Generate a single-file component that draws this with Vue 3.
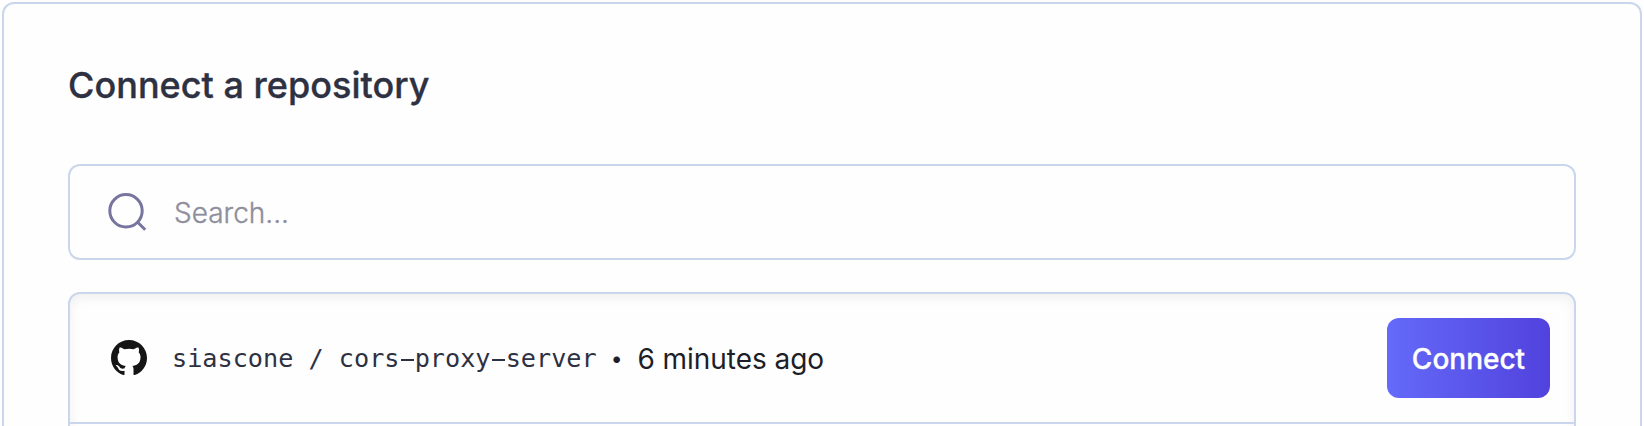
<script setup>
import { ref } from 'vue'

const query = ref('')
const owner = 'siascone'
const nameParts = 'cors-proxy-server'.split(/(-)/)
</script>

<template>
  <section class="card">
    <h1 class="title">Connect a repository</h1>
    <label class="search">
      <svg class="search-icon" viewBox="0 0 40 40" fill="none" stroke="#77749f" stroke-width="3">
        <circle cx="18" cy="18.8" r="16.2" />
        <path d="M29.4 30L37.2 37.7" />
      </svg>
      <input v-model="query" class="search-input" type="text" placeholder="Search..." />
    </label>
    <div class="list">
      <div class="row">
        <svg class="github" viewBox="0 0 16 16" fill="#151516">
          <path fill-rule="evenodd" d="M8 0C3.58 0 0 3.58 0 8c0 3.54 2.29 6.53 5.47 7.59.4.07.55-.17.55-.38 0-.19-.01-.82-.01-1.49-2.01.37-2.53-.49-2.69-.94-.09-.23-.48-.94-.82-1.13-.28-.15-.68-.52-.01-.53.63-.01 1.08.58 1.23.82.72 1.21 1.87.87 2.33.66.07-.52.28-.87.51-1.07-1.78-.2-3.64-.89-3.64-3.95 0-.87.31-1.59.82-2.15-.08-.2-.36-1.02.08-2.12 0 0 .67-.21 2.2.82.64-.18 1.32-.27 2-.27s1.36.09 2 .27c1.53-1.04 2.2-.82 2.2-.82.44 1.1.16 1.92.08 2.12.51.56.82 1.27.82 2.15 0 3.07-1.87 3.75-3.65 3.95.29.25.54.73.54 1.48 0 1.07-.01 1.93-.01 2.2 0 .21.15.46.55.38A8.01 8.01 0 0 0 16 8c0-4.42-3.58-8-8-8z" />
        </svg>
        <span class="repo">{{ owner }} / <span v-for="(part, i) in nameParts" :key="i" :class="{ dash: part === '-' }">{{ part }}</span></span>
        <span class="dot">•</span>
        <span class="time">6 minutes ago</span>
        <button class="connect" type="button">Connect</button>
      </div>
      <div class="row"></div>
    </div>
  </section>
</template>

<style>
body {
  background: #fefefe;
  overflow: hidden;
}
</style>

<style scoped>
.card {
  box-sizing: border-box;
  height: 424px;
  margin: 2px 2px 0;
  padding: 59px 64px 0;
  border: 2px solid #c9d6ec;
  border-bottom: 0;
  border-radius: 12px 12px 0 0;
  font-family: Inter, "Liberation Sans", sans-serif;
  overflow: hidden;
}
.title {
  margin: 0 0 57px;
  color: #2e3142;
  font-size: 36px;
  font-weight: 500;
  line-height: 44px;
  letter-spacing: 0.03px;
  -webkit-text-stroke: 0.35px currentColor;
}
.search {
  box-sizing: border-box;
  display: flex;
  align-items: center;
  height: 96px;
  padding-left: 38px;
  border: 2px solid #c9d6ec;
  border-radius: 12px;
}
.search-icon {
  width: 40px;
  height: 40px;
}
.search-input {
  flex: 1;
  margin: 2px 0 0 26px;
  padding: 0;
  border: 0;
  outline: 0;
  background: none;
  font: 300 28px/40px Inter, "Liberation Sans", sans-serif;
}
.search-input::placeholder {
  color: #8e8f9c;
  opacity: 1;
  -webkit-text-stroke: 0.35px #8e8f9c;
}
.list {
  margin-top: 32px;
  border: 2px solid #c9d6ec;
  border-radius: 12px;
  box-shadow: inset 0 4px 12px rgba(0, 0, 0, 0.06);
}
.row {
  box-sizing: content-box;
  display: flex;
  align-items: center;
  height: 80px;
  padding: 24px 24px 24px 41px;
  border-bottom: 2px solid #c9d6ec;
}
.github {
  width: 36px;
  height: 36px;
}
.repo {
  margin: 2px 0 0 25px;
  color: #2e3142;
  font: 25.2px/40px "DejaVu Sans Mono", monospace;
  white-space: pre;
}
/* widens the hyphen to nearly a full character cell */
.dash {
  display: inline-block;
  background: linear-gradient(#2e3142, #2e3142) 50% 20px / 13px 2px no-repeat;
}
.dot {
  margin-left: 14px;
  color: #1d1e27;
  font-size: 21px;
}
.time {
  margin: 1px 0 0 15px;
  color: #1d1e27;
  font-size: 28px;
  letter-spacing: -0.05px;
}
.connect {
  width: 163px;
  height: 80px;
  margin-left: auto;
  padding: 1px 0 0;
  border: 0;
  border-radius: 12px;
  background: linear-gradient(90deg, #646af9, #5142dd);
  color: #fff;
  font: 500 28px/40px Inter, "Liberation Sans", sans-serif;
  -webkit-text-stroke: 0.3px currentColor;
}
</style>
